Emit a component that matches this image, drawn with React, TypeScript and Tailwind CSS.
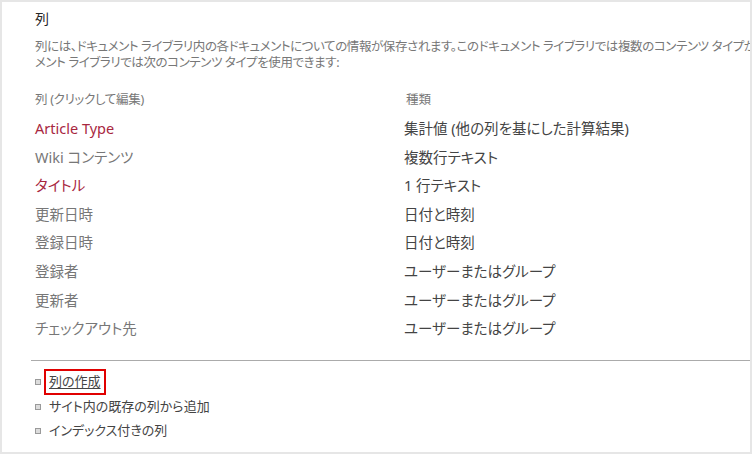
import React from 'react';

const font = "font-['Noto_Sans','Noto_Sans_CJK_JP',sans-serif] [font-feature-settings:'palt']";

const columns = [
  { name: 'Article Type', type: '集計値 (他の列を基にした計算結果)', link: true },
  { name: 'Wiki コンテンツ', type: '複数行テキスト', link: false },
  { name: 'タイトル', type: '1 行テキスト', link: true },
  { name: '更新日時', type: '日付と時刻', link: false },
  { name: '登録日時', type: '日付と時刻', link: false },
  { name: '登録者', type: 'ユーザーまたはグループ', link: false },
  { name: '更新者', type: 'ユーザーまたはグループ', link: false },
  { name: 'チェックアウト先', type: 'ユーザーまたはグループ', link: false },
];

function Bullet() {
  return <span className="inline-block w-[6px] h-[6px] border border-[#9a9a9a] bg-[#dcdcdc] mr-[8px] shrink-0" />;
}

export default function App() {
  return (
    <div className={`w-[752px] h-[454px] bg-white border-2 border-[#e6e6e6] overflow-hidden ${font}`}>
      <div className="pl-[33px] pt-[7px]">
        <h2 className="text-[14px] leading-[20px] text-[#262626]">列</h2>

        <div className="mt-[10px] text-[12.5px] leading-[16px] tracking-[-0.4px] text-[#777] whitespace-nowrap">
          <p>列には、ドキュメント ライブラリ内の各ドキュメントについての情報が保存されます。このドキュメント ライブラリでは複数のコンテンツ タイプが有効になっています。各ドキュ</p>
          <p>メント ライブラリでは次のコンテンツ タイプを使用できます:</p>
        </div>

        <div className="mt-[14px] grid grid-cols-[369px_1fr] text-[14.5px]">
          <div className="h-[29px] leading-[29px] text-[12.5px] tracking-[-0.3px] text-[#777]">列 (クリックして編集)</div>
          <div className="h-[29px] leading-[29px] text-[12.5px] text-[#777] pl-[2px]">種類</div>
          {columns.map((c) => (
            <React.Fragment key={c.name}>
              <div className={`h-[28.6px] leading-[28.6px] ${c.link ? 'text-[#a8273f]' : 'text-[#777]'}`}>{c.name}</div>
              <div className="h-[28.6px] leading-[28.6px] text-[#444]">{c.type}</div>
            </React.Fragment>
          ))}
        </div>

        <div className="mt-[17px] -ml-[4px] border-t border-[#ababab]" />

        <ul className="mt-[9px] text-[13px] text-[#444]">
          <li className="flex items-center h-[24.5px]">
            <Bullet />
            <span className="relative underline underline-offset-2">
              列の作成
              <span className="absolute -left-[5px] -right-[5px] -top-[3px] -bottom-[3px] border-2 border-[#e00000]" />
            </span>
          </li>
          <li className="flex items-center h-[24.5px]">
            <Bullet />
            <span>サイト内の既存の列から追加</span>
          </li>
          <li className="flex items-center h-[24.5px]">
            <Bullet />
            <span>インデックス付きの列</span>
          </li>
        </ul>
      </div>
    </div>
  );
}
